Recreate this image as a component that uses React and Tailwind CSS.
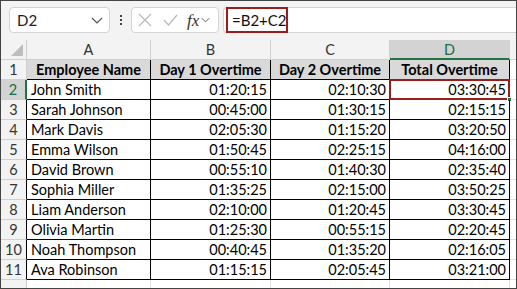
import React from "react";

const rows = [
  ["John Smith", "01:20:15", "02:10:30", "03:30:45"],
  ["Sarah Johnson", "00:45:00", "01:30:15", "02:15:15"],
  ["Mark Davis", "02:05:30", "01:15:20", "03:20:50"],
  ["Emma Wilson", "01:50:45", "02:25:15", "04:16:00"],
  ["David Brown", "00:55:10", "01:40:30", "02:35:40"],
  ["Sophia Miller", "01:35:25", "02:15:00", "03:50:25"],
  ["Liam Anderson", "02:10:00", "01:20:45", "03:30:45"],
  ["Olivia Martin", "01:25:30", "00:55:15", "02:20:45"],
  ["Noah Thompson", "00:40:45", "01:35:20", "02:16:05"],
  ["Ava Robinson", "01:15:15", "02:05:45", "03:21:00"],
];

const font = { fontFamily: "Lato, 'Open Sans', sans-serif" };

function Chevron({ w = 12, h = 7, className }) {
  return (
    <svg className={className} width={w} height={h} viewBox="0 0 12 7" fill="none">
      <path d="M1 1 L6 6 L11 1" stroke="#555" strokeWidth="1.2" />
    </svg>
  );
}

export default function App() {
  return (
    <div
      className="w-[517px] h-[289px] overflow-hidden bg-white border border-[#444] box-border flex flex-col text-black"
      style={font}
    >
      {/* Formula bar */}
      <div className="h-[39px] bg-[#f3f3f3] flex items-center pl-[8px] pb-[1px] shrink-0">
        <div className="w-[101px] h-[26px] bg-white border border-[#d4d4d4] rounded-[4px] flex items-center justify-between pl-[7px] pr-[6px]">
          <span className="text-[15px] text-[#222]">D2</span>
          <Chevron />
        </div>
        <div className="w-[21px] flex flex-col items-center gap-[2px]">
          <div className="w-[2px] h-[2px] bg-[#444]" />
          <div className="w-[2px] h-[2px] bg-[#444]" />
          <div className="w-[2px] h-[2px] bg-[#444]" />
        </div>
        <div className="w-[88px] h-[26px] bg-white border border-[#d4d4d4] rounded-[4px] flex items-center pl-[5px]">
          <svg width="14" height="14" viewBox="0 0 14 14" className="ml-[1px]">
            <path d="M1 1 L13 13 M13 1 L1 13" stroke="#b8b8b8" strokeWidth="1.2" />
          </svg>
          <svg width="15" height="12" viewBox="0 0 15 12" className="ml-[11px]">
            <path d="M1 6 L5.5 11 L14 1" stroke="#b8b8b8" strokeWidth="1.2" fill="none" />
          </svg>
          <span
            className="ml-[9px] text-[17px] italic text-[#333] leading-none"
            style={{ fontFamily: "'Liberation Serif', serif" }}
          >
            fx
          </span>
          <Chevron w={9} h={6} className="ml-[2px]" />
        </div>
        <div className="ml-[4px] flex-1 h-[26px] bg-white border border-[#d4d4d4] rounded-l-[4px] border-r-0 flex items-center">
          <div className="ml-[2px] h-[26px] w-[62px] border-2 border-[#9c1c1c] flex items-center pl-[4px] text-[15px] text-[#111]">
            =B2+C2
          </div>
        </div>
      </div>

      {/* Grid */}
      <div className="flex flex-col text-[14.5px]">
        {/* column headers */}
        <div className="flex h-[20px] bg-[#f3f3f3]">
          <div className="w-[26px] h-full relative border-r border-[#d0d0d0] border-b">
            <svg className="absolute right-[3px] bottom-[3px]" width="12" height="12" viewBox="0 0 12 12">
              <path d="M12 0 L12 12 L0 12 Z" fill="#bdbdbd" />
            </svg>
          </div>
          {[
            ["A", "w-[124px]"],
            ["B", "w-[120px]"],
            ["C", "w-[119px]"],
          ].map(([l, w]) => (
            <div
              key={l}
              className={`${w} h-full border-r border-b border-[#d0d0d0] flex items-center justify-center text-[#333] pt-[1px]`}
            >
              {l}
            </div>
          ))}
          <div className="w-[120px] h-full bg-[#d3d3d3] border-r border-[#d0d0d0] border-b-2 border-b-[#217346] flex items-center justify-center text-[#1e6b40] pt-[1px]">
            D
          </div>
          <div className="flex-1 h-full border-b border-[#d0d0d0]" />
        </div>

        {/* row 1 */}
        <div className="flex h-[20px]">
          <div className="w-[26px] h-full bg-[#f3f3f3] border-r border-b border-[#d0d0d0] flex items-center justify-center text-[#333]">
            1
          </div>
          {[
            ["Employee Name", "w-[124px]"],
            ["Day 1 Overtime", "w-[120px]"],
            ["Day 2 Overtime", "w-[119px]"],
            ["Total Overtime", "w-[120px]"],
          ].map(([t, w]) => (
            <div
              key={t}
              className={`${w} h-full bg-[#d9d9d9] border-r border-b border-black flex items-center justify-center font-bold`}
            >
              {t}
            </div>
          ))}
          <div className="flex-1 h-full border-b border-[#e0e0e0]" />
        </div>

        {rows.map((r, i) => {
          const sel = i === 0;
          return (
            <div key={i} className="flex h-[20px]">
              <div
                className={`w-[26px] h-full border-b border-[#d0d0d0] flex items-center justify-center ${
                  sel
                    ? "bg-[#d3d3d3] border-r-2 border-r-[#217346] text-[#1e6b40]"
                    : "bg-[#f3f3f3] border-r border-r-black text-[#333]"
                }`}
              >
                {i + 2}
              </div>
              <div className="w-[124px] h-full border-r border-b border-black flex items-center pl-[4px] whitespace-nowrap">
                {r[0]}
              </div>
              <div className="w-[120px] h-full border-r border-b border-black flex items-center justify-end pr-[3px]">
                {r[1]}
              </div>
              <div className="w-[119px] h-full border-r border-b border-black flex items-center justify-end pr-[3px]">
                {r[2]}
              </div>
              <div className="w-[120px] h-full border-r border-b border-black flex items-center justify-end pr-[3px] relative">
                {r[3]}
                {sel && (
                  <>
                    <div className="absolute left-[-1px] top-[-1px] right-[-1px] bottom-[-1px] border-2 border-[#9c1c1c]" />
                    <div className="absolute right-[-3px] bottom-[-3px] w-[5px] h-[5px] bg-[#217346] border border-white" />
                  </>
                )}
              </div>
              <div className="flex-1 h-full border-b border-[#e0e0e0]" />
            </div>
          );
        })}

        {/* partial row 12 */}
        <div className="flex h-[20px]">
          <div className="w-[26px] h-full bg-[#f3f3f3] border-r border-[#d0d0d0]" />
          <div className="w-[124px] h-full border-r border-[#e0e0e0]" />
          <div className="w-[120px] h-full border-r border-[#e0e0e0]" />
          <div className="w-[119px] h-full border-r border-[#e0e0e0]" />
          <div className="w-[120px] h-full border-r border-[#e0e0e0]" />
          <div className="flex-1" />
        </div>
      </div>
    </div>
  );
}
